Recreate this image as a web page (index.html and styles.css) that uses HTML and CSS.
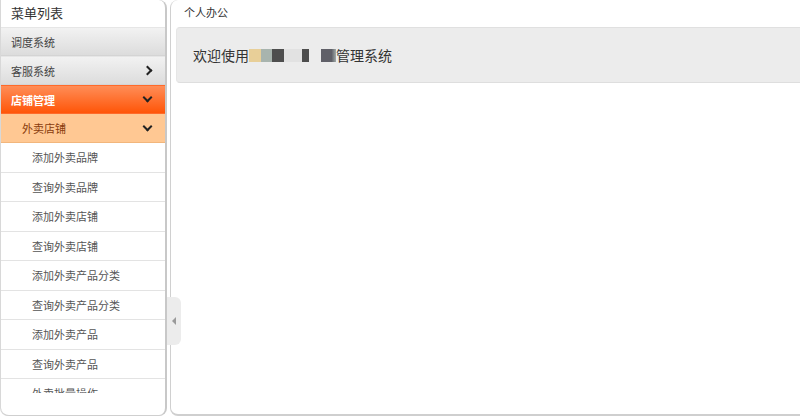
FILE: index.html
```html
<!DOCTYPE html>
<html lang="zh-CN">
<head>
    <meta charset="UTF-8">
    <title>管理系统</title>
    <link rel="stylesheet" href="styles.css">
</head>
<body>
    <div class="layout">
        <aside class="sidebar">
            <div class="sidebar-title">菜单列表</div>
            <div class="menu">
                <a class="menu-top">调度系统</a>
                <a class="menu-top">客服系统<span class="chev right"></span></a>
                <a class="menu-top active">店铺管理<span class="chev down"></span></a>
                <a class="menu-sub">外卖店铺<span class="chev down"></span></a>
                <a class="menu-item">添加外卖品牌</a>
                <a class="menu-item">查询外卖品牌</a>
                <a class="menu-item">添加外卖店铺</a>
                <a class="menu-item">查询外卖店铺</a>
                <a class="menu-item">添加外卖产品分类</a>
                <a class="menu-item">查询外卖产品分类</a>
                <a class="menu-item">添加外卖产品</a>
                <a class="menu-item">查询外卖产品</a>
                <a class="menu-item">外卖批量操作</a>
                <a class="menu-item">查询批量操作</a>
            </div>
            <div class="collapse"><span class="tri"></span></div>
        </aside>
        <main class="content">
            <div class="content-title">个人办公</div>
            <div class="welcome">
                欢迎使用<span class="blur">
                    <i class="b1"></i><i class="b2"></i><i class="b3"></i><i class="b4"></i><i class="b5"></i><i class="b6"></i><i class="b7"></i>
                </span>管理系统
            </div>
        </main>
    </div>
</body>
</html>
```
FILE: styles.css
```css
body, html {
    margin: 0;
    padding: 0;
    background: #ffffff;
    font-family: "Noto Sans CJK SC", "Liberation Sans", sans-serif;
    color: #333333;
}
.layout {
    display: flex;
    gap: 3px;
    height: 416px;
}
.sidebar {
    position: relative;
    width: 164px;
    flex: none;
    border: 1px solid #cfcfcf;
    border-top: none;
    border-left: none;
    border-right: 2px solid #c8c8c8;
    border-radius: 0 8px 8px 8px;
    box-shadow: -1px 0 0 #d8d8d8;
    margin-left: 1px;
    display: flex;
    flex-direction: column;
    background: #ffffff;
}
.sidebar-title {
    height: 27px;
    line-height: 26px;
    padding-left: 10px;
    font-size: 13px;
    color: #333333;
}
.menu {
    height: 366px;
    overflow: hidden;
}
.menu a {
    display: flex;
    align-items: center;
    justify-content: space-between;
    height: 29px;
    font-size: 11px;
    box-sizing: border-box;
    cursor: pointer;
}
.menu-top {
    padding: 0 14px 0 10px;
    color: #444444;
    background: linear-gradient(#f2f2f2, #dcdcdc);
    border-top: 1px solid #e6e6e6;
    border-bottom: 1px solid #d4d4d4;
}
.menu-top.active {
    color: #ffffff;
    font-weight: bold;
    background: linear-gradient(#ff8d57, #ff5508);
    border-color: #ff6a2a;
}
.menu-sub {
    padding: 0 14px 0 21px;
    color: #8a3c0c;
    background: #ffc893;
    border-bottom: 1px solid #f2b67c;
}
.menu-item {
    padding-left: 31px;
    color: #555555;
    height: 29.5px !important;
    border-bottom: 1px solid #e3e3e3;
}
.chev {
    width: 5px;
    height: 5px;
    border-right: 2px solid #222222;
    border-bottom: 2px solid #222222;
}
.chev.right {
    transform: rotate(-45deg);
}
.chev.down {
    transform: rotate(45deg);
    margin-top: -4px;
}
.collapse {
    position: absolute;
    right: -16px;
    top: 297px;
    width: 14px;
    height: 48px;
    background: #ececec;
    border-radius: 0 6px 6px 0;
    display: flex;
    align-items: center;
    justify-content: center;
}
.tri {
    width: 0;
    height: 0;
    border-top: 4px solid transparent;
    border-bottom: 4px solid transparent;
    border-right: 4px solid #9a9a9a;
}
.content {
    flex: 1;
    border: 1px solid #d0d0d0;
    border-top: none;
    border-right: none;
    border-bottom: 2px solid #cfcfcf;
    border-radius: 8px 0 0 8px;
    padding-left: 5px;
}
.content-title {
    height: 27px;
    line-height: 24px;
    padding-left: 8px;
    font-size: 11px;
    color: #333333;
}
.welcome {
    height: 54px;
    display: flex;
    align-items: center;
    padding-left: 16px;
    font-size: 14px;
    color: #333333;
    background: #ececec;
    border-top: 1px solid #e0e0e0;
    border-bottom: 1px solid #dedede;
    border-left: 1px solid #e6e6e6;
    border-radius: 4px 0 0 4px;
}
.blur {
    display: inline-flex;
    align-items: center;
    height: 14px;
}
.blur i {
    display: inline-block;
    height: 13px;
}
.blur .b1 { background: #e8cf98; width: 12px; }
.blur .b2 { background: #a8b4ae; width: 11px; }
.blur .b3 { background: #4e4e4e; width: 12px; }
.blur .b4 { background: #e2e2e2; width: 18px; }
.blur .b5 { background: #4d4d4d; width: 7px; }
.blur .b6 { background: transparent; width: 12px; }
.blur .b7 { background: linear-gradient(90deg, #606068 70%, #a0aaa8); width: 15px; }
```
